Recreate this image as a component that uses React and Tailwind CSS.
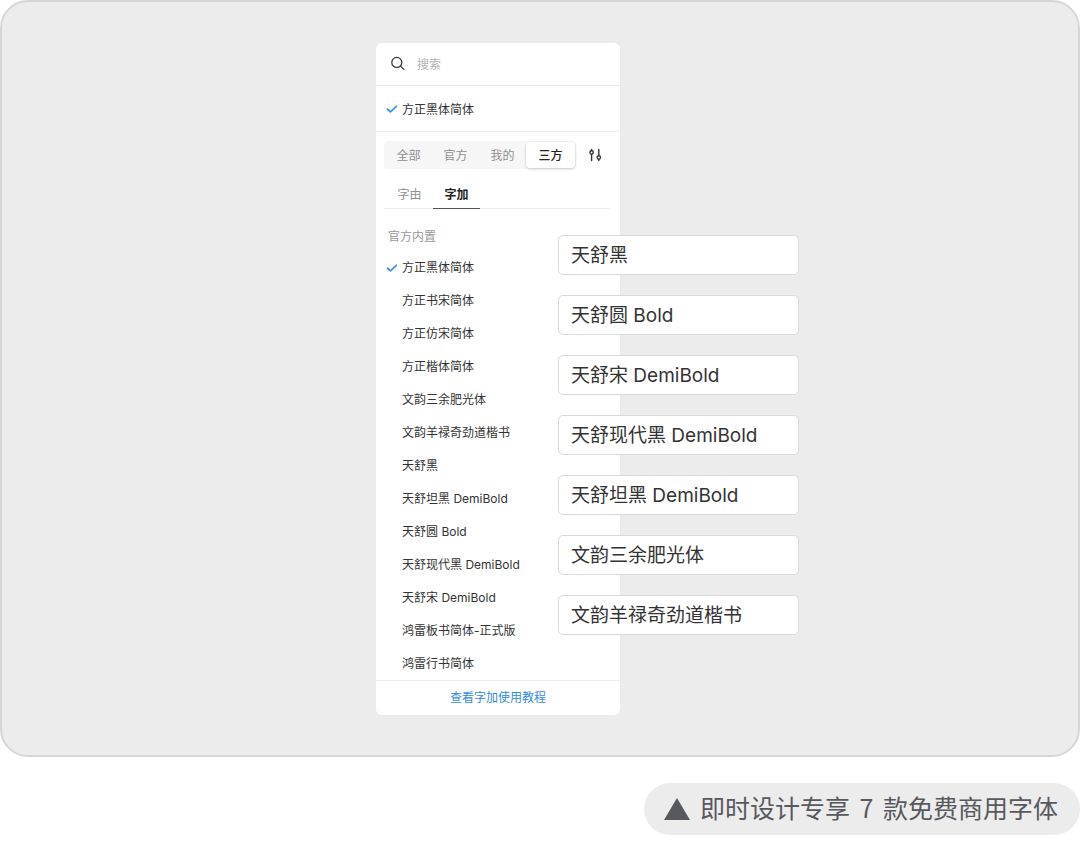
import { useState } from 'react'
import clsx from 'clsx'

const SOURCES = ['全部', '官方', '我的', '三方']
const PROVIDERS = ['字由', '字加']

const FONTS = [
  '方正黑体简体',
  '方正书宋简体',
  '方正仿宋简体',
  '方正楷体简体',
  '文韵三余肥光体',
  '文韵羊禄奇劲道楷书',
  '天舒黑',
  '天舒坦黑 DemiBold',
  '天舒圆 Bold',
  '天舒现代黑 DemiBold',
  '天舒宋 DemiBold',
  '鸿雷板书简体-正式版',
  '鸿雷行书简体',
]

const FEATURED = [
  '天舒黑',
  '天舒圆 Bold',
  '天舒宋 DemiBold',
  '天舒现代黑 DemiBold',
  '天舒坦黑 DemiBold',
  '文韵三余肥光体',
  '文韵羊禄奇劲道楷书',
]

function SearchIcon() {
  return (
    <svg className="size-4 shrink-0" viewBox="0 0 16 16" fill="none" stroke="#3a3a3a" strokeWidth="1.3" strokeLinecap="round" aria-hidden="true">
      <circle cx="6.8" cy="6.4" r="5" />
      <path d="M10.5 10.1 14 13.4" />
    </svg>
  )
}

function CheckIcon() {
  return (
    <svg className="size-3 shrink-0" viewBox="0 0 12 12" fill="none" stroke="#3f94e2" strokeWidth="1.8" strokeLinecap="round" strokeLinejoin="round" aria-hidden="true">
      <path d="M1.5 6.2 4.5 8.8 10.4 3.3" />
    </svg>
  )
}

function FilterIcon() {
  return (
    <svg className="size-4" viewBox="0 0 16 16" fill="none" stroke="#333" strokeWidth="1.4" strokeLinecap="round" aria-hidden="true">
      <path d="M3.6 2.4v1.2M3.6 7.4v6.2M10.8 2.4v6.2M10.8 12.4v1.2" />
      <circle cx="3.6" cy="5.5" r="1.7" />
      <circle cx="10.8" cy="10.5" r="1.7" />
    </svg>
  )
}

function FontPanel() {
  const [source, setSource] = useState('三方')
  const [provider, setProvider] = useState('字加')
  const [font, setFont] = useState('方正黑体简体')

  return (
    <div className="w-[244px] shrink-0 overflow-hidden rounded-md bg-white text-xs text-[#333]">
      <label className="flex h-[43px] items-center gap-[11px] border-b border-[#ececec] px-3.5">
        <SearchIcon />
        <input
          type="search"
          aria-label="搜索"
          placeholder="搜索"
          className="min-w-0 flex-1 bg-transparent pt-0.5 outline-none placeholder:text-[#b3b3b3]"
        />
      </label>

      <div className="flex h-[46px] items-center gap-1 border-b border-[#ececec] px-2.5">
        <CheckIcon />
        <span className="pt-0.5">{font}</span>
      </div>

      <div className="flex items-center gap-3 px-2 pt-[9px]">
        <div className="flex h-7 w-48 rounded-sm bg-[#f6f6f6] pl-px">
          {SOURCES.map((name) => (
            <button
              key={name}
              type="button"
              onClick={() => setSource(name)}
              className={clsx(
                'pt-0.5',
                source === name
                  ? 'my-px w-[49px] rounded-sm bg-white font-medium text-[#222] shadow-[0_1px_3px_rgba(0,0,0,0.2)]'
                  : 'w-[47px] text-[#8f8f8f]'
              )}
            >
              {name}
            </button>
          ))}
        </div>
        <button type="button" aria-label="筛选">
          <FilterIcon />
        </button>
      </div>

      <div className="mr-2.5 ml-2 flex h-10 border-b border-[#ececec] pt-2.5 pl-0.5">
        {PROVIDERS.map((name) => (
          <button
            key={name}
            type="button"
            onClick={() => setProvider(name)}
            className={clsx(
              '-mb-px w-[47px] border-b pt-0.5',
              provider === name
                ? 'border-[#555] font-bold text-[#222]'
                : 'border-transparent text-[#8f8f8f]'
            )}
          >
            {name}
          </button>
        ))}
      </div>

      <h2 className="px-3 pt-5 pb-1.5 leading-4 text-[#999]">官方内置</h2>
      <ul>
        {FONTS.map((name) => (
          <li key={name}>
            <button
              type="button"
              onClick={() => setFont(name)}
              className="flex h-[33px] w-full items-center gap-1 px-2.5 text-left"
            >
              {font === name ? <CheckIcon /> : <span className="w-3" />}
              {name}
            </button>
          </li>
        ))}
      </ul>

      <div className="flex h-[35px] items-center justify-center border-t border-[#ececec]">
        <a href="#tutorial" className="text-[#2d8de5]">查看字加使用教程</a>
      </div>
    </div>
  )
}

export default function App() {
  return (
    <main className="bg-white font-[Inter,'Noto_Sans_CJK_SC',sans-serif]">
      <section className="flex items-start justify-center rounded-[28px] border-2 border-[#d6d6d6] bg-[#ececec] pt-[41px] pb-10 pl-[95px]">
        <FontPanel />
        {/* featured fonts overlap the right edge of the panel */}
        <ul className="z-10 mt-48 -ml-[62px] flex w-[241px] flex-col gap-5 text-[19px] text-[#333]">
          {FEATURED.map((name) => (
            <li key={name} className="flex h-10 items-center rounded-[5px] border border-[#d9d9d9] bg-white px-3 pt-0.5">
              {name}
            </li>
          ))}
        </ul>
      </section>

      <div className="mt-[26px] flex justify-end">
        <p className="flex h-[52px] items-center gap-2.5 rounded-full bg-[#ececec] pr-[22px] pl-5 font-['Noto_Sans_CJK_SC',sans-serif] text-[25px] leading-none text-[#58595e]">
          <svg className="h-[22px] w-[26px]" viewBox="0 0 26 22" fill="currentColor" aria-hidden="true">
            <path d="M13 0 26 22H0Z" />
          </svg>
          <span className="pb-1">
            即时设计专享<span className="mx-1"> 7 </span>款免费商用字体
          </span>
        </p>
      </div>
    </main>
  )
}
